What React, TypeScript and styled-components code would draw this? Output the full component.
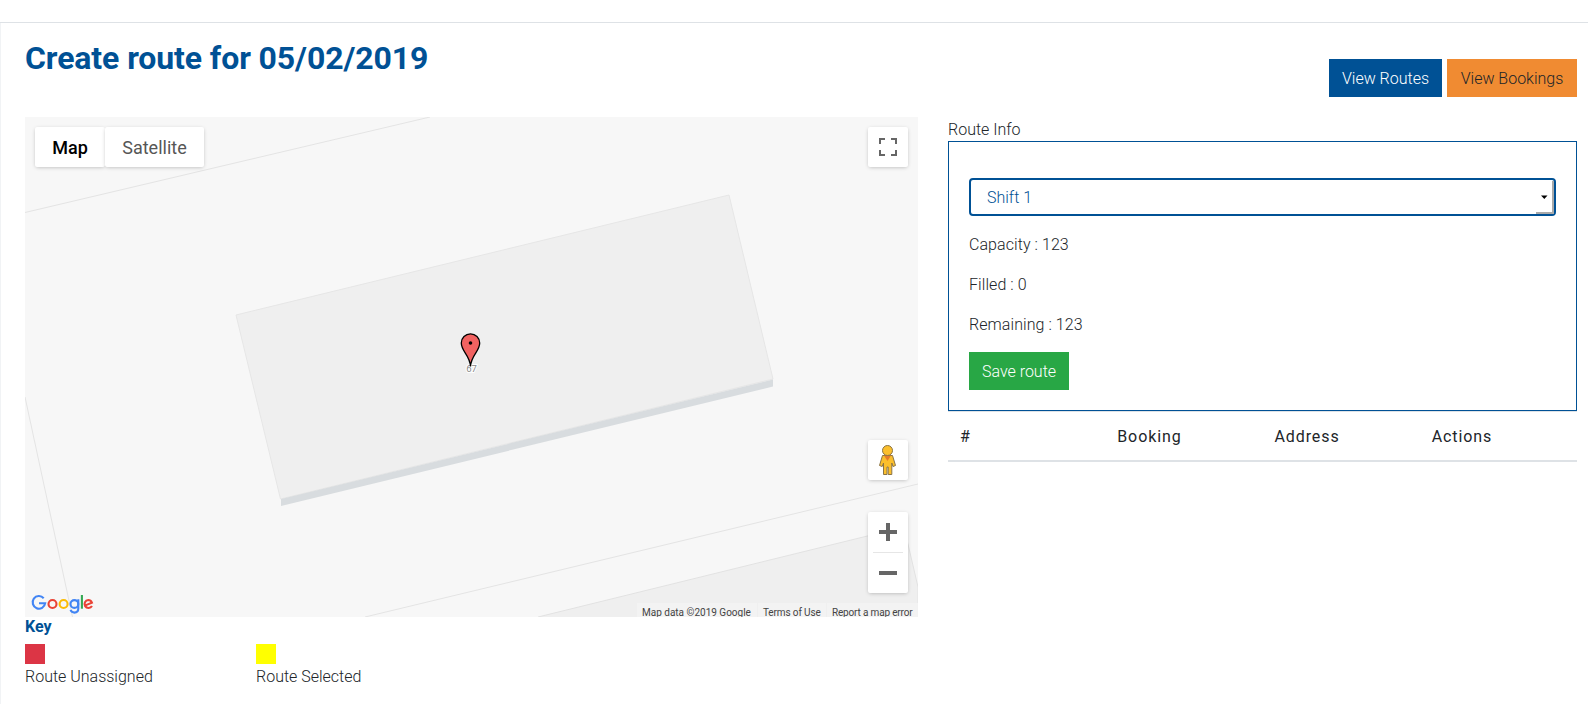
import React from 'react';
import styled, { createGlobalStyle, css } from 'styled-components';

const Global = createGlobalStyle`
  *, *::before, *::after { box-sizing: border-box; }
  body { margin: 0; background: #fff; color: #212529; font: 300 16px/26px Roboto, sans-serif; }
`;

const TopBar = styled.header`
  height: 23px;
  border-bottom: 1px solid #dee2e6;
`;
const Page = styled.main`
  height: 681px;
  border-left: 1px solid #f1f3f5;
  padding: 16px 11px 0 24px;
`;
const Heading = styled.div`
  display: flex;
  justify-content: space-between;
  height: 78px;
`;
const Title = styled.h1`
  margin: 0;
  font-size: 32px;
  line-height: 38px;
  font-weight: 700;
  letter-spacing: -0.1px;
  color: #005195;
`;
const Actions = styled.div`
  display: flex;
  gap: 5px;
  padding-top: 20px;
`;
const Button = styled.button<{ $tone: 'blue' | 'orange' | 'green'; $width: number }>`
  display: block;
  width: ${({ $width }) => $width}px;
  height: 38px;
  padding: 2px 0 0;
  border: 0;
  font: 300 16px/24px Roboto, sans-serif;
  white-space: nowrap;
  ${({ $tone }) =>
    $tone === 'blue'
      ? css`background: #005195; color: #fff;`
      : $tone === 'orange'
      ? css`background: #f08b32; color: #212529;`
      : css`background: #28a745; color: #fff;`}
`;
const Columns = styled.div`
  display: grid;
  grid-template-columns: 893px 629px;
  column-gap: 30px;
`;
const MapBox = styled.section`
  position: relative;
  height: 500px;
  overflow: hidden;
  background: #f7f7f7;
`;
const MapDrawing = styled.svg`
  display: block;
`;
const shadow = css`
  background: #fff;
  border-radius: 2px;
  box-shadow: 0 1px 4px -1px rgba(0, 0, 0, 0.3);
`;
const MapTypes = styled.div`
  position: absolute;
  left: 10px;
  top: 10px;
  display: flex;
`;
const MapType = styled.div<{ $active?: boolean }>`
  ${shadow}
  height: 40px;
  width: ${({ $active }) => ($active ? 70 : 99)}px;
  text-align: center;
  font-size: 18px;
  line-height: 41px;
  font-weight: ${({ $active }) => ($active ? 500 : 400)};
  color: ${({ $active }) => ($active ? '#000' : '#565656')};
`;
const Control = styled.div<{ $top: number; $tall?: boolean }>`
  ${shadow}
  position: absolute;
  right: 10px;
  top: ${({ $top }) => $top}px;
  width: 40px;
  height: ${({ $tall }) => ($tall ? 81 : 40)}px;
  svg { display: block; }
`;
const Credits = styled.div`
  position: absolute;
  right: 0;
  bottom: 0;
  height: 14px;
  display: flex;
  gap: 1px;
  font-size: 10px;
  line-height: 20px;
  font-weight: 400;
  color: #444;
  overflow: hidden;
  white-space: nowrap;
`;
const Credit = styled.span<{ $width: number; $spacing?: number }>`
  width: ${({ $width }) => $width}px;
  padding-left: 5px;
  letter-spacing: ${({ $spacing = 0 }) => $spacing}px;
  background: rgba(245, 245, 245, 0.7);
`;
const KeyTitle = styled.div`
  font-weight: 700;
  line-height: 19px;
  color: #005195;
  margin-bottom: 8px;
`;
const KeyRow = styled.div`
  display: grid;
  grid-template-columns: 231px 231px;
`;
const Swatch = styled.div<{ $color: string }>`
  width: 20px;
  height: 20px;
  background: ${({ $color }) => $color};
`;
const PanelTitle = styled.div`
  height: 24px;
`;
const Panel = styled.div`
  height: 270px;
  border: 1px solid #005195;
  padding: 36px 20px 0;
`;
const Stat = styled.p`
  margin: 0 0 14px;
  letter-spacing: 0.07px;
`;
const Select = styled.div`
  height: 38px;
  margin-bottom: 16px;
  border: 2px solid #005195;
  border-radius: 4px;
  padding-left: 16px;
  display: flex;
  justify-content: space-between;
  line-height: 36px;
  color: #005195;
  svg { display: block; }
`;
const Table = styled.table`
  width: 100%;
  table-layout: fixed;
  border-collapse: separate;
  border-spacing: 0;
  border-bottom: 2px solid #dee2e6;
  th {
    height: 49px;
    padding: 1px 12px 0;
    text-align: left;
    font-weight: 400;
    font-size: 16px;
    letter-spacing: 0.9px;
    border-top: 1px solid #dee2e6;
  }
`;

const Logo = () => (
  <g fill="none" strokeWidth="2.1">
    <path stroke="#4285f4" d="M18.7 481.2A6.3 6.3 0 1 0 20.2 486.2H14" />
    <circle cx="27.5" cy="487" r="4" stroke="#ea4335" />
    <circle cx="38.6" cy="487" r="4" stroke="#fbbc05" />
    <circle cx="49.4" cy="487" r="3.9" stroke="#4285f4" />
    <path stroke="#4285f4" d="M53.3 482.3V491.5Q53.3 495.6 49.4 495.6Q46.7 495.6 45.5 492.9" />
    <path stroke="#34a853" d="M56.9 478V491.7" />
    <path stroke="#ea4335" d="M59.8 488.6L66.9 485.6Q65.8 483 63.3 483A4 4 0 1 0 67 489" />
  </g>
);

export default function App() {
  return (
    <>
      <Global />
      <TopBar />
      <Page>
        <Heading>
          <Title>Create route for 05/02/2019</Title>
          <Actions>
            <Button $tone="blue" $width={113}>View Routes</Button>
            <Button $tone="orange" $width={130}>View Bookings</Button>
          </Actions>
        </Heading>
        <Columns>
          <div>
            <MapBox>
              <MapDrawing width="893" height="500" viewBox="0 0 893 500">
                <path d="M0 95.5L405 0M0 280L47.5 500M340 500L893 367" fill="none" stroke="#e4e4e4" />
                <path d="M211 198L704 78L748 262L255.5 382Z" fill="#efefef" stroke="#e6e6e6" />
                <path d="M256 382L748 262.5V269.5L256 389Z" fill="#d8dcdf" />
                <path d="M513 500L879 410L893 470V501H513Z" fill="#efefef" stroke="#e2e2e2" />
                <text x="446.5" y="255" textAnchor="middle" fontSize="9.5" fontWeight="400" fill="#888" stroke="#fff" strokeWidth="2" paintOrder="stroke">67</text>
                <path d="M445.5 249.5C445 238 436.3 234.5 436.3 226A9.2 9.2 0 0 1 454.7 226C454.7 234.5 446 238 445.5 249.5Z" fill="#f16261" stroke="#000" strokeWidth="1.3" />
                <circle cx="445.5" cy="226" r="1.8" />
                <Logo />
              </MapDrawing>
              <MapTypes>
                <MapType $active>Map</MapType>
                <MapType>Satellite</MapType>
              </MapTypes>
              <Control $top={10}>
                <svg width="40" height="40" fill="none" stroke="#666" strokeWidth="2">
                  <path d="M12 17V12H17M23 12H28V17M28 23V28H23M17 28H12V23" />
                </svg>
              </Control>
              <Control $top={323}>
                <svg width="40" height="40" fill="#fbbf2d" stroke="#8a7446" strokeWidth="1">
                  <path d="M14.5 15.5H24.5L27.5 25.5L25 26.5L23.8 23V34.5H20.2V27H19V34.5H15.5V23L14.2 26.5L11.5 25.5Z" />
                  <path d="M16 15.5H23L19.5 21Z" fill="#e57b2b" stroke="none" />
                  <circle cx="19.5" cy="10.5" r="5" />
                </svg>
              </Control>
              <Control $top={395} $tall>
                <svg width="40" height="81" fill="none" stroke="#666" strokeWidth="4">
                  <path d="M11 20H29M20 11V29M11 61H29" />
                  <path d="M5 40.5H35" stroke="#e6e6e6" strokeWidth="1" />
                </svg>
              </Control>
              <Credits>
                <Credit $width={120}>Map data ©2019 Google</Credit>
                <Credit $width={68} $spacing={-0.13}>Terms of Use</Credit>
                <Credit $width={91} $spacing={-0.17}>Report a map error</Credit>
              </Credits>
            </MapBox>
            <KeyTitle>Key</KeyTitle>
            <KeyRow>
              <div>
                <Swatch $color="#dc3545" />
                Route Unassigned
              </div>
              <div>
                <Swatch $color="#ffff00" />
                Route Selected
              </div>
            </KeyRow>
          </div>
          <div>
            <PanelTitle>Route Info</PanelTitle>
            <Panel>
              <Select>
                Shift 1
                <svg width="18" height="34">
                  <path d="M5 15.5H11.5L8.3 19Z" />
                  <path d="M17 1V33M0 33H18" fill="none" stroke="#aaa" strokeWidth="2" />
                </svg>
              </Select>
              <Stat>Capacity : 123</Stat>
              <Stat>Filled : 0</Stat>
              <Stat>Remaining : 123</Stat>
              <Button $tone="green" $width={100}>Save route</Button>
            </Panel>
            <Table>
              <thead>
                <tr>
                  <th>#</th>
                  <th>Booking</th>
                  <th>Address</th>
                  <th>Actions</th>
                </tr>
              </thead>
            </Table>
          </div>
        </Columns>
      </Page>
    </>
  );
}
